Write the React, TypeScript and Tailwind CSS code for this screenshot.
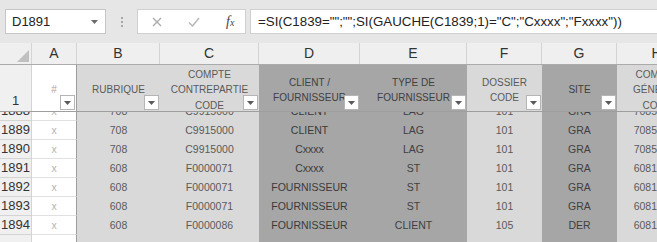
import React from "react";

type Col = {
  letter: string;
  w: string;
  bg: string;
  hdrText: string;
  dataText: string;
  header: string[];
};

const cols: Col[] = [
  { letter: "A", w: "w-[45px]", bg: "bg-white", hdrText: "text-[#a6a6a6]", dataText: "text-[#b3b3b3] text-[9px]", header: ["#"] },
  { letter: "B", w: "w-[83px]", bg: "bg-[#d9d9d9]", hdrText: "text-[#595959]", dataText: "text-[#595959]", header: ["RUBRIQUE"] },
  { letter: "C", w: "w-[99px]", bg: "bg-[#d9d9d9]", hdrText: "text-[#595959]", dataText: "text-[#595959]", header: ["COMPTE", "CONTREPARTIE", "CODE"] },
  { letter: "D", w: "w-[101px]", bg: "bg-[#a6a6a6]", hdrText: "text-[#404040]", dataText: "text-[#3a3a3a]", header: ["CLIENT /", "FOURNISSEUR"] },
  { letter: "E", w: "w-[107px]", bg: "bg-[#a6a6a6]", hdrText: "text-[#404040]", dataText: "text-[#404040]", header: ["TYPE DE", "FOURNISSEUR"] },
  { letter: "F", w: "w-[75px]", bg: "bg-[#d9d9d9]", hdrText: "text-[#595959]", dataText: "text-[#595959]", header: ["DOSSIER", "CODE"] },
  { letter: "G", w: "w-[75px]", bg: "bg-[#a6a6a6]", hdrText: "text-[#404040]", dataText: "text-[#404040]", header: ["SITE"] },
  { letter: "H", w: "w-[80px]", bg: "bg-[#d9d9d9]", hdrText: "text-[#595959]", dataText: "text-[#595959]", header: ["COMPTE", "GÉNÉRAL", "CODE"] },
];

const rows: [string, string[]][] = [
  ["1888", ["x", "708", "C9915000", "CLIENT", "LAG", "101", "GRA", "70850000"]],
  ["1889", ["x", "708", "C9915000", "CLIENT", "LAG", "101", "GRA", "70850000"]],
  ["1890", ["x", "708", "C9915000", "Cxxxx", "LAG", "101", "GRA", "70850000"]],
  ["1891", ["x", "608", "F0000071", "Cxxxx", "ST", "101", "GRA", "60810000"]],
  ["1892", ["x", "608", "F0000071", "FOURNISSEUR", "ST", "101", "GRA", "60810000"]],
  ["1893", ["x", "608", "F0000071", "FOURNISSEUR", "ST", "101", "GRA", "60810000"]],
  ["1894", ["x", "608", "F0000086", "FOURNISSEUR", "CLIENT", "105", "DER", "60810000"]],
];

function FilterButton() {
  return (
    <div className="absolute right-[1px] bottom-[1px] flex h-[15px] w-[15px] items-center justify-center border border-[#b5b5b5] bg-white">
      <svg width="7" height="4" viewBox="0 0 7 4">
        <path d="M0 0h7L3.5 4z" fill="#5a5a5a" />
      </svg>
    </div>
  );
}

function DataRow({ num, cells }: { num: string; cells: string[] }) {
  return (
    <div className="flex h-[19px] shrink-0">
      <div className="flex w-[32px] shrink-0 items-center justify-center border-r border-b border-[#d4d4d4] bg-[#f0f0f0] text-[13px] text-[#333]">
        {num}
      </div>
      {cols.map((c, i) => (
        <div
          key={c.letter}
          className={`flex shrink-0 items-center justify-center pt-[1px] whitespace-nowrap text-[10.5px] ${c.w} ${c.bg} ${c.dataText} ${
            i === 0 ? "border-r border-b border-r-[#9e9e9e] border-b-[#e1e1e1]" : ""
          }`}
        >
          {cells[i]}
        </div>
      ))}
    </div>
  );
}

export default function App() {
  return (
    <div className="h-[242px] w-[657px] overflow-hidden bg-[#e6e6e6] font-['Liberation_Sans',Arial,sans-serif]">
      {/* name box + formula bar */}
      <div className="flex h-[43px] pt-[9px] pb-[9px] pl-[5px]">
        <div className="flex h-[25px] w-[101px] shrink-0 items-center border border-[#c6c6c6] bg-white pl-[6px] pr-[7px] text-[13px] text-[#222]">
          D1891
          <svg className="ml-auto" width="7" height="4" viewBox="0 0 7 4">
            <path d="M0 0h7L3.5 4z" fill="#6a6a6a" />
          </svg>
        </div>
        <div className="flex w-[31px] shrink-0 flex-col items-center justify-center gap-[2px]">
          <span className="h-[2px] w-[2px] bg-[#a8a8a8]" />
          <span className="h-[2px] w-[2px] bg-[#a8a8a8]" />
          <span className="h-[2px] w-[2px] bg-[#a8a8a8]" />
        </div>
        <div className="flex h-[25px] w-[109px] shrink-0 items-center border border-[#d0d0d0] bg-white">
          <svg className="ml-[14px]" width="10" height="10" viewBox="0 0 10 10">
            <path d="M1 1l8 8M9 1l-8 8" stroke="#a9a9a9" strokeWidth="1.3" />
          </svg>
          <svg className="ml-[26px]" width="12" height="10" viewBox="0 0 12 10">
            <path d="M1 5.5l3.5 3.5L11 1" stroke="#b5b5b5" strokeWidth="1.4" fill="none" />
          </svg>
          <span className="ml-[26px] font-['Liberation_Serif',serif] text-[14px] italic text-[#444]">
            f<span className="text-[10px]">x</span>
          </span>
        </div>
        <div className="ml-[4px] flex h-[25px] flex-1 items-center border-y border-l border-[#d0d0d0] bg-white pl-[7px] text-[13.3px] whitespace-nowrap text-[#222]">
          =SI(C1839="";"";SI(GAUCHE(C1839;1)="C";"Cxxxx";"Fxxxx"))
        </div>
      </div>

      {/* column letters */}
      <div className="flex h-[22px] border-b border-[#ababab] bg-[#efefef]">
        <div className="flex w-[32px] shrink-0 items-end justify-end border-r border-[#d4d4d4] pr-[2px] pb-[2px]">
          <svg width="12" height="12" viewBox="0 0 12 12">
            <path d="M12 0v12H0z" fill="#c0c0c0" />
          </svg>
        </div>
        {cols.map((c) => (
          <div
            key={c.letter}
            className={`flex shrink-0 items-center justify-center border-r border-[#d4d4d4] text-[14px] text-[#333] ${c.w}`}
          >
            {c.letter}
          </div>
        ))}
      </div>

      {/* header row 1 */}
      <div className="flex h-[47px] border-b border-[#9e9e9e]">
        <div className="flex w-[32px] shrink-0 items-end justify-center border-r border-[#d4d4d4] bg-[#f0f0f0] pb-[1px] text-[13px] text-[#333]">
          1
        </div>
        {cols.map((c, i) => (
          <div
            key={c.letter}
            className={`relative flex shrink-0 flex-col items-center justify-center pt-[4px] text-[10px] leading-[15.5px] whitespace-nowrap ${c.w} ${c.bg} ${c.hdrText} ${
              i === 0 ? "border-r border-[#9e9e9e]" : ""
            }`}
          >
            {c.header.map((l) => (
              <span key={l}>{l}</span>
            ))}
            <FilterButton />
          </div>
        ))}
      </div>

      {/* first row scrolled partly under the frozen header */}
      <div className="h-[9px] overflow-hidden">
        <div className="mt-[-10px]">
          <DataRow num={rows[0][0]} cells={rows[0][1]} />
        </div>
      </div>
      {rows.slice(1).map(([n, cells]) => (
        <DataRow key={n} num={n} cells={cells} />
      ))}
      <DataRow num="" cells={["", "", "", "", "", "", "", ""]} />
    </div>
  );
}
